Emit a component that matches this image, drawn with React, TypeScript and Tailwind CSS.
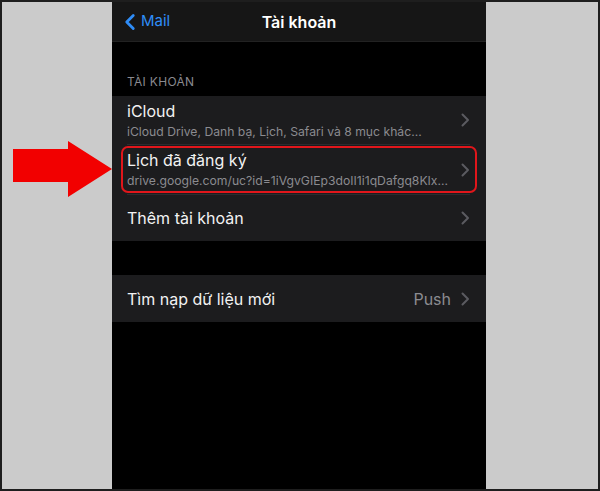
import { ChevronLeft } from "lucide-react";

function Chevron() {
  return (
    <svg width="9" height="14" viewBox="0 0 9 14" className="shrink-0">
      <path d="M1.5 1.5 L7 7 L1.5 12.5" fill="none" stroke="#5b5b60" strokeWidth="2" strokeLinecap="round" strokeLinejoin="round" />
    </svg>
  );
}

function Row({
  title,
  subtitle,
  value,
  height,
  divider,
  highlight,
}: {
  title: string;
  subtitle?: string;
  value?: string;
  height: string;
  divider?: boolean;
  highlight?: boolean;
}) {
  return (
    <div className={`relative flex items-center pl-[15px] pr-[16px] bg-[#1c1c1e] ${height}`}>
      <div className={`flex-1 min-w-0 flex items-center self-stretch ${divider ? "border-b border-[#2c2c2f]" : ""}`}>
        <div className="flex-1 min-w-0">
          <div className="text-[16px] leading-[20px] text-[#f2f2f2]">{title}</div>
          {subtitle && (
            <div className="mt-[3px] text-[12.2px] leading-[16px] text-[#8b8b90] whitespace-nowrap overflow-hidden">{subtitle}</div>
          )}
        </div>
        {value && <span className="mr-[10px] text-[16px] text-[#8b8b90]">{value}</span>}
        <Chevron />
      </div>
      {highlight && (
        <div className="absolute left-[9px] right-[9px] top-[1px] bottom-[2px] rounded-[7px] border-2 border-[#e0161b]" />
      )}
    </div>
  );
}

export default function App() {
  return (
    <div
      className="w-[600px] h-[491px] bg-[#cbcbcb] border-2 border-[#1e1e1e] flex overflow-hidden"
      style={{ fontFamily: "Inter, 'Noto Sans', sans-serif" }}
    >
      {/* Red pointer arrow */}
      <div className="w-[110px] shrink-0 pt-[139px] pl-[11px]">
        <svg width="99" height="56" viewBox="0 0 99 56">
          <polygon points="0,8 55,8 55,0 99,28 55,56 55,41 0,41" fill="#f20000" />
        </svg>
      </div>

      {/* Phone screen */}
      <div className="w-[374px] shrink-0 bg-black flex flex-col">
        <div className="h-[40px] bg-[#161616] border-b border-[#222] relative flex items-center">
          <div className="flex items-center pl-[5px] text-[#2f8df7]">
            <ChevronLeft size={26} strokeWidth={2.6} />
            <span className="text-[15px] -ml-[2px]">Mail</span>
          </div>
          <div className="absolute inset-0 flex items-center justify-center text-[16px] font-semibold text-white">
            Tài khoản
          </div>
        </div>

        <div className="h-[33px]" />
        <div className="pl-[15px] h-[21px] text-[12px] leading-[14px] text-[#8a8a8f] tracking-wide">TÀI KHOẢN</div>

        <Row
          title="iCloud"
          subtitle="iCloud Drive, Danh bạ, Lịch, Safari và 8 mục khác..."
          height="h-[49px]"
          divider
        />
        <Row
          title="Lịch đã đăng ký"
          subtitle="drive.google.com/uc?id=1iVgvGIEp3doII1i1qDafgq8KIx..."
          height="h-[50px]"
          divider
          highlight
        />
        <Row title="Thêm tài khoản" height="h-[46px]" />

        <div className="h-[34px]" />
        <Row title="Tìm nạp dữ liệu mới" value="Push" height="h-[47px]" />
      </div>

      <div className="flex-1" />
    </div>
  );
}
